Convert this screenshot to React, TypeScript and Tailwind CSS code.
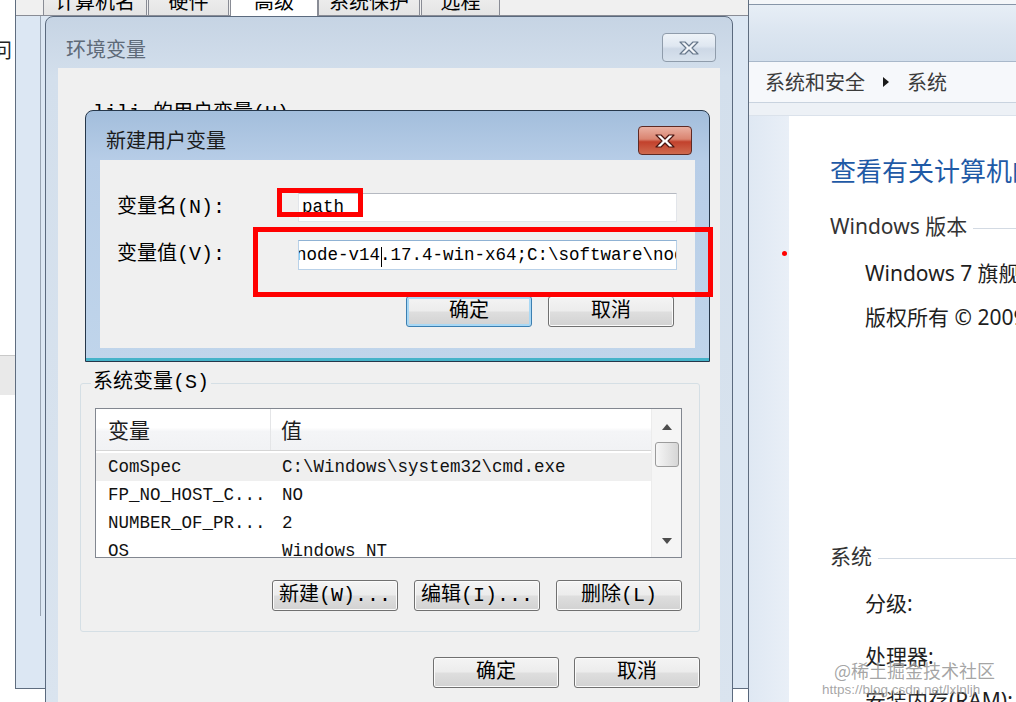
import clsx from 'clsx';

const mono = "font-['Liberation_Mono','Noto_Sans_CJK_SC',monospace]";
const cjk = "font-['Noto_Sans_CJK_SC',sans-serif]";
const sans = "font-['Noto_Sans','Noto_Sans_CJK_SC',sans-serif]";

const tabs = [
  { label: '计算机名', w: 'w-[104px]' },
  { label: '硬件', w: 'w-[81px] ml-[1px]' },
  { label: '高级', w: 'w-[88px] ml-[1px]', active: true },
  { label: '系统保护', w: 'w-[102px]' },
  { label: '远程', w: 'w-[79px] ml-[1px]' },
];

const sysVars = [
  { name: 'ComSpec', value: 'C:\\Windows\\system32\\cmd.exe' },
  { name: 'FP_NO_HOST_C...', value: 'NO' },
  { name: 'NUMBER_OF_PR...', value: '2' },
  { name: 'OS', value: 'Windows_NT' },
  { name: 'Path', value: 'C:\\Windows\\system32;C:\\Windows' },
];

function CloseGlyph({ active }: { active: boolean }) {
  return (
    <svg width="22" height="14" viewBox="0 0 22 14">
      <path
        d="M2 1h5l4 4 4-4h5l-6 6 6 6h-5l-4-4-4 4H2l6-6z"
        fill={active ? '#ffffff' : '#f3f6fa'}
        stroke={active ? '#4a1510' : '#66768a'}
        strokeWidth="1.2"
        strokeLinejoin="round"
      />
    </svg>
  );
}

function CloseButton({ active }: { active: boolean }) {
  return (
    <div
      className={clsx(
        'flex h-[29px] w-[54px] items-center justify-center rounded-[4px] border',
        active
          ? 'border-[#5e2a24] bg-[linear-gradient(180deg,#eab0a2_0%,#da8470_45%,#c2412c_55%,#cf6a4f_100%)]'
          : 'border-[#8f9cab] bg-[linear-gradient(180deg,#eef3f8_0%,#dfe7f1_45%,#cdd8e6_55%,#d8e2ed_100%)]'
      )}
    >
      <CloseGlyph active={active} />
    </div>
  );
}

function WinButton({ label, focused }: { label: string; focused?: boolean }) {
  return (
    <div
      className={clsx(
        mono,
        'flex h-[31px] w-[126px] items-center justify-center rounded-[3px] border text-[20px] leading-none text-black',
        'bg-[linear-gradient(180deg,#f4f4f4_0%,#ececec_48%,#dedede_52%,#d2d2d2_100%)]',
        focused
          ? 'border-[#3c7fb1] shadow-[inset_0_0_0_2px_#a8d8f5]'
          : 'border-[#707070] shadow-[inset_0_0_0_1px_#fbfbfb]'
      )}
    >
      {label}
    </div>
  );
}

function Triangle({ up }: { up?: boolean }) {
  return (
    <svg width="10" height="6" viewBox="0 0 10 6">
      <path d={up ? 'M0 6L5 0l5 6z' : 'M0 0h10L5 6z'} fill="#4d4d4d" />
    </svg>
  );
}

function ControlPanel() {
  return (
    <div className={clsx(sans, 'absolute left-[748px] top-0 flex h-full w-[268px] flex-col overflow-hidden border-l border-[#56657a]')}>
      <div className="h-[5px] shrink-0 border-b border-[#8795a8] bg-[#f4f6f9]" />
      <div className="h-[57px] shrink-0 border-b border-[#a9b8ca] bg-[linear-gradient(180deg,#e7eef6_0%,#dbe5f0_50%,#d3dfec_100%)]" />
      <div className={clsx(cjk, 'flex h-[41px] shrink-0 items-center gap-[18px] border-b border-[#c9d3df] bg-[#f6f8fb] pl-[16px] text-[20px] text-[#3b3b3b]')}>
        <span>系统和安全</span>
        <svg width="6" height="10" viewBox="0 0 6 10">
          <path d="M0 0l6 5-6 5z" fill="#1a1a1a" />
        </svg>
        <span>系统</span>
      </div>
      <div className="h-[13px] shrink-0 border-b border-[#dbe2eb] bg-[#edf1f6]" />
      <div className="flex min-h-0 flex-1">
        <div className="w-[40px] shrink-0 bg-[linear-gradient(90deg,#dfe8f3_0%,#e9eff7_100%)]" />
        <div className="min-w-0 flex-1 overflow-hidden whitespace-nowrap bg-white pl-[41px] text-[#1e1e1e]">
          <div className={clsx(cjk, 'mt-[37px] h-[34px] text-[26px] leading-[34px] text-[#1f5aa6]')}>
            查看有关计算机的基本信息
          </div>
          <div className="mt-[25px] flex h-[28px] items-center text-[21px] leading-[28px] text-[#333]">
            <span>Windows 版本</span>
            <div className="ml-[6px] mt-[4px] h-px flex-1 bg-[#d3dae3]" />
          </div>
          <div className="ml-[35px] mt-[19px] h-[28px] text-[21px] leading-[28px]">Windows 7 旗舰版</div>
          <div className="ml-[35px] mt-[16px] h-[28px] text-[21px] leading-[28px]">
            版权所有 © 2009 Microsoft Corporation。
          </div>
          <div className="mt-[211px] flex h-[28px] items-center text-[21px] leading-[28px] text-[#333]">
            <span>系统</span>
            <div className="ml-[6px] mt-[4px] h-px flex-1 bg-[#d3dae3]" />
          </div>
          <div className="ml-[35px] mt-[19px] h-[28px] text-[21px] leading-[28px]">分级:</div>
          <div className="ml-[35px] mt-[25px] h-[28px] text-[21px] leading-[28px]">处理器:</div>
          <div className="ml-[35px] mt-[16px] h-[28px] text-[21px] leading-[28px]">安装内存(RAM):</div>
        </div>
      </div>
    </div>
  );
}

function SystemProperties() {
  return (
    <div className="absolute left-[15px] top-[-31px] flex h-[720px] w-[734px] flex-col border border-[#5f6d7f] bg-[#dce7f3]">
      <div className={clsx(cjk, 'flex h-[46px] items-end border-b border-[#898c95] bg-[#f0f0f0] pl-[27px] text-[20px] text-black')}>
        {tabs.map((t) => (
          <div
            key={t.label}
            className={clsx(
              t.w,
              'flex items-start justify-center rounded-t-[2px] border border-b-0 border-[#898c95] leading-[24px]',
              t.active ? 'relative z-10 -mb-px h-[34px] bg-white pt-[6px]' : 'h-[31px] bg-[linear-gradient(180deg,#f3f3f3,#e4e4e4)] pt-[4px]'
            )}
          >
            {t.label}
          </div>
        ))}
      </div>
      <div className="ml-[24px] h-[600px] w-[8px] border-l border-[#99a5b3]" />
    </div>
  );
}

function SystemVarList() {
  return (
    <div className="flex h-[150px] border border-[#828790] bg-white">
      <div className="flex min-w-0 flex-1 flex-col overflow-hidden">
        <div className={clsx(cjk, 'flex h-[42px] shrink-0 border-b border-[#d5d5d5] bg-[linear-gradient(180deg,#ffffff_0%,#ffffff_45%,#f4f5f7_55%,#f1f2f4_100%)] text-[21px] text-[#1e1e1e]')}>
          <div className="flex w-[175px] items-center border-r border-[#e4e5e7] pl-[12px]">变量</div>
          <div className="flex items-center pl-[10px]">值</div>
        </div>
        <div className={clsx(mono, 'pt-[2px] text-[17.5px] text-[#111]')}>
          {sysVars.map((v, i) => (
            <div key={v.name} className={clsx('flex h-[28px] items-center whitespace-nowrap', i === 0 && 'bg-[#efefef]')}>
              <span className="w-[175px] shrink-0 pl-[12px]">{v.name}</span>
              <span className="pl-[11px]">{v.value}</span>
            </div>
          ))}
        </div>
      </div>
      <div className="flex w-[30px] flex-col items-center border-l border-[#ececec] bg-[#f5f5f5]">
        <div className="mt-[15px]">
          <Triangle up />
        </div>
        <div className="mt-[12px] h-[25px] w-[24px] rounded-[3px] border border-[#9b9b9b] bg-[linear-gradient(90deg,#f6f6f6_0%,#e6e6e6_50%,#d6d6d6_100%)]" />
        <div className="flex-1" />
        <div className="mb-[13px]">
          <Triangle />
        </div>
      </div>
    </div>
  );
}

function EnvDialog() {
  return (
    <div className="absolute left-[45px] top-[16px] flex h-[700px] w-[688px] flex-col rounded-t-[8px] border border-[#5b6a7e] bg-[linear-gradient(180deg,#c6d4e4_0%,#d3dfec_60px,#dae4ef_100%)] px-[12px]">
      <div className="flex h-[51px] shrink-0 items-start justify-between">
        <span className={clsx(cjk, 'mt-[20px] pl-[8px] text-[20px] leading-[24px] text-[#5e6a78]')}>环境变量</span>
        <div className="mr-[4px] mt-[16px]">
          <CloseButton active={false} />
        </div>
      </div>
      <div className={clsx(mono, 'flex flex-1 flex-col bg-[#f0f0f0] text-black')}>
        <div className="ml-[35px] mt-[34px] h-[24px] text-[20px] leading-[24px]">lili 的用户变量(U)</div>
        <fieldset className="ml-[22px] mt-[245px] w-[620px] rounded-[3px] border border-[#d5dfe5] pb-[20px] pl-[14px] pr-[17px]">
          <legend className="-ml-[4px] px-[2px] text-[20px] leading-[24px]">系统变量(S)</legend>
          <div className="mt-[13px]">
            <SystemVarList />
          </div>
          <div className="mt-[22px] flex justify-end gap-[16px]">
            <WinButton label="新建(W)..." />
            <WinButton label="编辑(I)..." />
            <WinButton label="删除(L)" />
          </div>
        </fieldset>
        <div className="mt-[25px] flex justify-end gap-[15px] pr-[20px]">
          <WinButton label="确定" />
          <WinButton label="取消" />
        </div>
      </div>
    </div>
  );
}

function NewVarDialog() {
  return (
    <div className="absolute left-[85px] top-[110px] flex h-[252px] w-[625px] flex-col rounded-t-[8px] border border-[#26374a] bg-[linear-gradient(180deg,#a3bedc_0%,#b7cde7_50px,#c0d5eb_100%)] px-[14px] pb-[13px] shadow-[inset_0_-3px_0_#45b3c9]">
      <div className="flex h-[49px] shrink-0 items-start justify-between">
        <span className={clsx(cjk, 'mt-[17px] pl-[6px] text-[20px] leading-[24px] text-[#1b1b1b]')}>新建用户变量</span>
        <div className="mr-[3px] mt-[15px]">
          <CloseButton active />
        </div>
      </div>
      <div className={clsx(mono, 'flex flex-1 flex-col bg-[#f0f0f0] pl-[17px] pt-[33px] text-black')}>
        <div className="flex h-[29px] items-center">
          <span className="w-[181px] text-[20px]">变量名(N):</span>
          <div className="flex h-[29px] w-[379px] items-center overflow-hidden border border-[#e2e5ea] border-t-[#b5b9c1] bg-white pl-[3px] text-[17.5px]">
            path
          </div>
        </div>
        <div className="mt-[18px] flex h-[30px] items-center">
          <span className="w-[181px] text-[20px]">变量值(V):</span>
          <div className="flex h-[30px] w-[379px] items-center overflow-hidden whitespace-nowrap border border-[#b9d1e8] border-t-[#8fb2d4] bg-white text-[17.5px]">
            <span className="-ml-[3px]">
              node-v14
              <span className="relative">
                .<span className="absolute left-[1px] top-[2px] h-[20px] w-px bg-black" />
              </span>
              17.4-win-x64;C:\software\node
            </span>
          </div>
        </div>
        <div className="mt-[26px] flex justify-end gap-[16px] pr-[21px]">
          <WinButton label="确定" focused />
          <WinButton label="取消" />
        </div>
      </div>
    </div>
  );
}

export default function App() {
  return (
    <div className={clsx(cjk, 'relative h-[702px] w-[1016px] overflow-hidden bg-white')}>
      {/* window sliver on the far left */}
      <div className="absolute left-0 top-0 flex h-full w-[15px] flex-col overflow-hidden bg-white">
        <span className="-ml-[8px] mt-[38px] text-[20px] leading-[24px] text-[#222]">问</span>
        <div className="mt-[293px] h-[40px] border-t border-[#c9c9c9] bg-[#e9e9e9]" />
      </div>

      <ControlPanel />
      <SystemProperties />
      <EnvDialog />
      <NewVarDialog />

      {/* annotations */}
      <div className="absolute left-[277px] top-[188px] h-[29px] w-[86px] border-[5px] border-[#ff0000]" />
      <div className="absolute left-[253px] top-[227px] h-[70px] w-[460px] border-[5px] border-[#ff0000]" />
      <div className="absolute left-[782px] top-[251px] h-[5px] w-[5px] rounded-full bg-[#ff0000]" />

      {/* watermark */}
      <div className="pointer-events-none absolute left-[834px] top-[658px] flex flex-col items-start text-[rgba(105,105,105,0.6)] [text-shadow:0_0_2px_#fff]">
        <span className="text-[18px] leading-[24px]">@稀土掘金技术社区</span>
        <span className="-ml-[12px] font-['Liberation_Sans',sans-serif] text-[13.5px] leading-[16px]">https://blog.csdn.net/lxlnljh</span>
      </div>
    </div>
  );
}
